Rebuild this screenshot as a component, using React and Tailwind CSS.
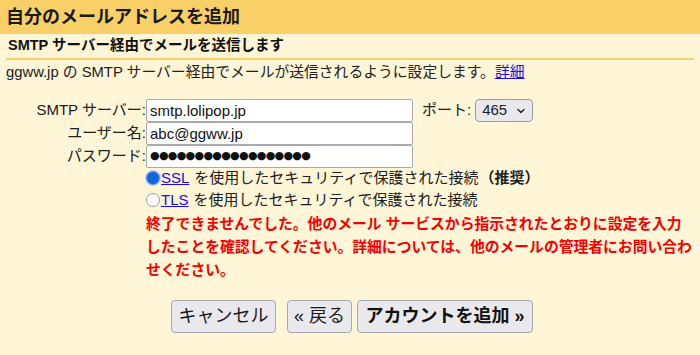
import React from 'react'

const FONT = { fontFamily: '"Liberation Sans", Arial, "Noto Sans CJK JP", sans-serif' }

function TextField({ value }) {
  return (
    <input
      readOnly
      type="text"
      value={value}
      className="w-[267px] h-[23px] px-[3px] bg-white border border-[#a9a9b0] rounded-[2px] text-[15px] text-[#111] outline-none"
      style={FONT}
    />
  )
}

function PasswordField({ length }) {
  return (
    <div className="w-[267px] h-[23px] px-[3px] bg-white border border-[#a9a9b0] rounded-[2px] flex items-center text-[11px] tracking-[-0.7px] text-[#111] overflow-hidden" style={{ fontFamily: '"DejaVu Sans", sans-serif' }}>
      {'●'.repeat(length)}
    </div>
  )
}

function Radio({ checked }) {
  return checked ? (
    <span className="w-[14px] h-[14px] rounded-full bg-[#1167d8] border border-[#5f9bea] shadow-[0_0_0_1px_#b9d3f6] flex-shrink-0" />
  ) : (
    <span className="w-[14px] h-[14px] rounded-full bg-white border border-[#9a9aa2] flex-shrink-0" />
  )
}

export default function App() {
  return (
    <div className="w-[700px] h-[355px] bg-[#fff5d7] overflow-hidden text-[#202020]" style={FONT}>
      {/* title bar */}
      <div className="h-[34px] bg-[#f9d067] px-[6px] flex items-center text-[18px] font-bold text-[#1a1a1a]">
        自分のメールアドレスを追加
      </div>

      <div className="px-[6px]">
        <div className="h-[23px] pt-[1px] px-[2px] flex items-center text-[14.5px] font-bold text-[#111]">
          SMTP サーバー経由でメールを送信します
        </div>
        <div className="h-[2px] mt-[1px] bg-[#f9d067]" />
        <div className="h-[24px] flex items-center text-[14.8px]">
          ggww.jp の SMTP サーバー経由でメールが送信されるように設定します。
          <a href="#" className="text-[#1a0dea] underline">詳細</a>
        </div>
      </div>

      {/* form */}
      <div className="mt-[15px] grid grid-cols-[146px_auto] text-[15px]">
        <div className="flex items-center justify-end">SMTP サーバー:</div>
        <div className="flex items-center gap-[8px]">
          <TextField value="smtp.lolipop.jp" />
          <span className="ml-[1px]">ポート:</span>
          <div className="h-[23px] w-[58px] -ml-[4px] flex items-center justify-between pl-[6px] pr-[6px] bg-[#e9e9ed] border border-[#9c9ca6] rounded-[4px]">
            <span>465</span>
            <svg width="10" height="10" viewBox="0 0 10 10" fill="none">
              <path d="M2 3.5l3 3 3-3" stroke="#222" strokeWidth="1.4" strokeLinecap="round" strokeLinejoin="round" />
            </svg>
          </div>
        </div>

        <div className="flex items-center justify-end">ユーザー名:</div>
        <div className="flex items-center">
          <TextField value="abc@ggww.jp" />
        </div>

        <div className="flex items-center justify-end">パスワード:</div>
        <div className="flex items-center">
          <PasswordField length={18} />
        </div>

        <div />
        <div className="flex flex-col">
          <div className="h-[20px] flex items-center gap-[1px]">
            <Radio checked />
            <a href="#" className="text-[#1a0dea] underline">SSL</a>
            <span className="ml-[4px]">を使用したセキュリティで保護された接続</span>
            <span className="font-bold">（推奨）</span>
          </div>
          <div className="h-[24px] flex items-center gap-[1px]">
            <Radio />
            <a href="#" className="text-[#1a0dea] underline">TLS</a>
            <span className="ml-[4px]">を使用したセキュリティで保護された接続</span>
          </div>
          <div className="mt-[1px] text-[#f40000] font-bold text-[14.8px] leading-[23px]">
            <div>終了できませんでした。他のメール サービスから指示されたとおりに設定を入力</div>
            <div>したことを確認してください。詳細については、他のメールの管理者にお問い合わ</div>
            <div>せください。</div>
          </div>
        </div>
      </div>

      {/* buttons */}
      <div className="mt-[18px] pl-[171px] flex items-center">
        <button className="h-[33px] w-[105px] bg-[#e9e9ed] border border-[#a6a6ae] rounded-[4px] text-[18px] text-[#1a1a1a]" style={FONT}>
          キャンセル
        </button>
        <button className="ml-[11px] h-[33px] w-[65px] bg-[#e9e9ed] border border-[#a6a6ae] rounded-[4px] text-[18px] text-[#1a1a1a]" style={FONT}>
          « 戻る
        </button>
        <button className="ml-[5px] h-[33px] w-[176px] bg-[#e9e9ed] border border-[#a6a6ae] rounded-[4px] text-[18px] font-bold text-[#111]" style={FONT}>
          アカウントを追加 »
        </button>
      </div>
    </div>
  )
}
